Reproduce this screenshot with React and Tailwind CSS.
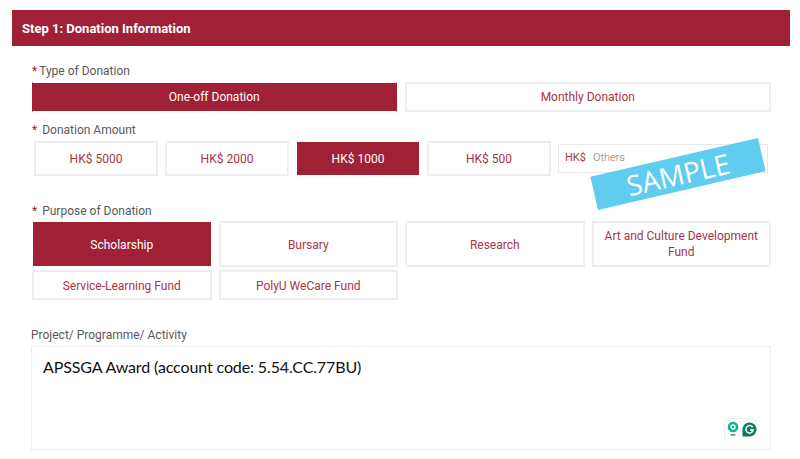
import React from 'react';

const on = 'bg-[#a02136] text-white border border-white';
const off = 'bg-white text-[#a8344a] border-2 border-[#eeeeee]';

function Choice({ active, className = '', children }) {
  return (
    <div className={`flex items-center justify-center text-center text-[12px] leading-[16px] ${active ? on : off} ${className}`}>
      {children}
    </div>
  );
}

function Label({ gap = 'ml-[5px]', className = '', children }) {
  return (
    <div className={`flex h-[18px] items-center pt-[1px] text-[12px] text-[#5a5a5a] ${className}`}>
      <span className="text-[#a02136]">*</span>
      <span className={gap}>{children}</span>
    </div>
  );
}

function GrammarlyBadge() {
  return (
    <div className="absolute bottom-[10px] right-[11px] flex h-[21px] w-[35px] items-center justify-center gap-[3px] rounded-t-[8px] rounded-br-[8px] border-t border-l border-[#e8eeee] bg-white">
      <svg width="12" height="16" viewBox="0 0 12 16">
        <circle cx="6" cy="6" r="4" fill="none" stroke="#10b48f" strokeWidth="2.6" />
        <circle cx="6" cy="6" r="1.2" fill="#10b48f" />
        <rect x="3.5" y="13" width="5" height="1.6" fill="#6b8f86" />
      </svg>
      <svg width="15" height="15" viewBox="0 0 15 15">
        <path d="M7.5 0.5a7 7 0 1 1 0 14H0.5V7.5a7 7 0 0 1 7-7z" fill="#0f7a63" />
        <path d="M10.6 5.2A3.7 3.7 0 1 0 11.2 8H8" fill="none" stroke="#fff" strokeWidth="1.5" />
      </svg>
    </div>
  );
}

export default function App() {
  return (
    <div className="h-[459px] w-[800px] overflow-hidden bg-white pt-[10px] pl-[12px] font-['Roboto',sans-serif]">
      <div className="flex h-[36px] w-[778px] items-center bg-[#a02136] pl-[10px] pt-[1px] text-[13px] font-bold text-white">
        Step 1: Donation Information
      </div>

      <div className="ml-[19px] w-[740px]">
        <Label gap="ml-[2px]" className="mt-[15px] pl-[1px]">Type of Donation</Label>
        <div className="mt-[3px] flex gap-[8px] pl-[1px]">
          <Choice active className="h-[30px] flex-1 border-x-[#a02136]">One-off Donation</Choice>
          <Choice className="h-[30px] flex-1">Monthly Donation</Choice>
        </div>

        <Label className="mt-[8px] pl-[1px]">Donation Amount</Label>
        <div className="relative mt-[3px] flex items-center gap-[7px] pl-[3px]">
          <Choice className="h-[35px] w-[124px] pt-[1px]">HK$ 5000</Choice>
          <Choice className="h-[35px] w-[124px] pt-[1px]">HK$ 2000</Choice>
          <Choice active className="h-[35px] w-[124px] pt-[1px]">HK$ 1000</Choice>
          <Choice className="h-[35px] w-[124px] pt-[1px]">HK$ 500</Choice>
          <div className="flex h-[29px] w-[210px] items-center border border-[#e8e8e8] pl-[6px]">
            <span className="text-[11px] text-[#a8344a]">HK$</span>
            <span className="ml-[7px] text-[11px] font-light text-[#777]">Others</span>
          </div>
          <div className="absolute left-[561px] top-[16px] flex h-[34px] w-[172px] -rotate-[13deg] items-center justify-center bg-[#60cdf0] font-['Open_Sans',sans-serif] text-[28px] text-white">
            SAMPLE
          </div>
        </div>

        <Label className="mt-[25px] pl-[1px]">Purpose of Donation</Label>
        <div className="mt-[2px] grid grid-cols-4 gap-x-[7px] gap-y-[3px] pl-[1px]">
          <Choice active className="h-[46px] pt-[1px]">Scholarship</Choice>
          <Choice className="h-[46px] pt-[1px]">Bursary</Choice>
          <Choice className="h-[46px] pt-[1px]">Research</Choice>
          <Choice className="h-[46px] px-[8px]">Art and Culture Development Fund</Choice>
          <Choice className="h-[30px] pt-[1px]">Service-Learning Fund</Choice>
          <Choice className="h-[30px] pt-[1px]">PolyU WeCare Fund</Choice>
        </div>

        <div className="mt-[25px] flex h-[18px] items-center pt-[1px] text-[12px] text-[#5a5a5a]">
          Project/ Programme/ Activity
        </div>
        <div className="relative mt-[3px] h-[104px] border border-[#eeeeee] pl-[11px] pt-[8px] font-['Lato',sans-serif] text-[16px] leading-[24px] tracking-[-0.12px] text-[#111]">
          APSSGA Award (account code: 5.54.CC.77BU)
          <GrammarlyBadge />
        </div>
      </div>
    </div>
  );
}
